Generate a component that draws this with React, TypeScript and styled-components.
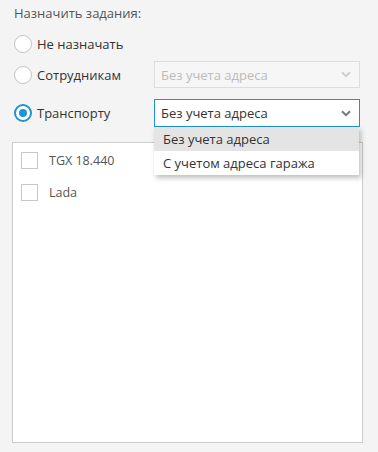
import React from "react";
import styled, { createGlobalStyle } from "styled-components";

const GlobalStyle = createGlobalStyle`
  body {
    margin: 0;
    background: #f4f4f4;
    font-family: "Open Sans", "Liberation Sans", sans-serif;
  }
`;

const vehicles = ["TGX 18.440", "Lada"];
const addressOptions = ["Без учета адреса", "С учетом адреса гаража"];

const Chevron: React.FC<{ color: string }> = ({ color }) => (
  <svg width="10" height="7" viewBox="0 0 10 7">
    <path d="M1 1.2 L5 5.2 L9 1.2" fill="none" stroke={color} strokeWidth="2" />
  </svg>
);

const App: React.FC = () => {
  return (
    <Panel>
      <GlobalStyle />
      <Title>Назначить задания:</Title>
      <Options>
        <OptionRow $height={20}>
          <Radio />
          <RadioLabel>Не назначать</RadioLabel>
        </OptionRow>
        <OptionRow $height={27} $gap={7}>
          <RadioCell>
            <Radio />
            <RadioLabel>Сотрудникам</RadioLabel>
          </RadioCell>
          <Select $disabled>
            <span>Без учета адреса</span>
            <Chevron color="#cfcfcf" />
          </Select>
        </OptionRow>
        <OptionRow $height={28} $gap={11}>
          <RadioCell>
            <Radio $checked />
            <RadioLabel>Транспорту</RadioLabel>
          </RadioCell>
          <SelectWrap>
            <Select $open>
              <span>Без учета адреса</span>
              <Chevron color="#777" />
            </Select>
            <Menu>
              {addressOptions.map((opt, i) => (
                <MenuItem key={opt} $active={i === 0}>
                  {opt}
                </MenuItem>
              ))}
            </Menu>
          </SelectWrap>
        </OptionRow>
      </Options>
      <VehicleList>
        {vehicles.map((v) => (
          <VehicleRow key={v}>
            <Checkbox />
            <VehicleName>{v}</VehicleName>
          </VehicleRow>
        ))}
      </VehicleList>
    </Panel>
  );
};

export default App;

const Panel = styled.div`
  padding: 4px 16px 0 12px;
  color: #333;
  font-size: 13px;
`;

const Title = styled.div`
  padding-left: 2px;
  line-height: 18px;
  color: #555;
`;

const Options = styled.div`
  display: flex;
  flex-direction: column;
  padding-left: 2px;
  margin-top: 12px;
`;

const OptionRow = styled.div<{ $height: number; $gap?: number }>`
  display: flex;
  align-items: center;
  height: ${(p) => p.$height}px;
  margin-top: ${(p) => p.$gap ?? 0}px;
`;

const RadioCell = styled.div`
  display: flex;
  align-items: center;
  width: 140px;
`;

const Radio = styled.span<{ $checked?: boolean }>`
  box-sizing: border-box;
  width: 18px;
  height: 18px;
  border-radius: 50%;
  background: #fff;
  border: ${(p) => (p.$checked ? "2px solid #1e93d6" : "1px solid #c4c4c4")};
  display: flex;
  align-items: center;
  justify-content: center;

  &::after {
    content: "";
    display: ${(p) => (p.$checked ? "block" : "none")};
    width: 8px;
    height: 8px;
    border-radius: 50%;
    background: #1e93d6;
  }
`;

const RadioLabel = styled.span`
  margin-left: 5px;
  color: #333;
`;

const SelectWrap = styled.div`
  position: relative;
`;

const Select = styled.div<{ $disabled?: boolean; $open?: boolean }>`
  box-sizing: border-box;
  width: 206px;
  height: ${(p) => (p.$open ? 28 : 27)}px;
  display: flex;
  align-items: center;
  justify-content: space-between;
  padding: 0 8px 0 6px;
  border: 1px solid ${(p) => (p.$open ? "#1e93d6" : "#dddddd")};
  background: ${(p) => (p.$disabled ? "#f6f6f6" : "#fff")};
  color: ${(p) => (p.$disabled ? "#bbbbbb" : "#333")};
`;

const Menu = styled.div`
  position: absolute;
  top: 28px;
  left: 0;
  width: 205px;
  background: #fff;
  box-shadow: 2px 3px 5px rgba(0, 0, 0, 0.25);
  z-index: 2;
`;

const MenuItem = styled.div<{ $active?: boolean }>`
  height: 24px;
  line-height: 24px;
  padding-left: 9px;
  background: ${(p) => (p.$active ? "#e4e4e4" : "#fff")};
  color: #333;
`;

const VehicleList = styled.div`
  box-sizing: border-box;
  margin-top: 15px;
  width: 351px;
  height: 301px;
  background: #fff;
  border: 1px solid #cccccc;
  padding: 8px 8px;
`;

const VehicleRow = styled.div`
  display: flex;
  align-items: center;
  height: 18px;
  margin-bottom: 14px;
`;

const Checkbox = styled.span`
  box-sizing: border-box;
  width: 17px;
  height: 17px;
  border: 1px solid #c8c8c8;
  background: #fff;
`;

const VehicleName = styled.span`
  margin-left: 11px;
  color: #555;
  font-size: 12.5px;
`;
